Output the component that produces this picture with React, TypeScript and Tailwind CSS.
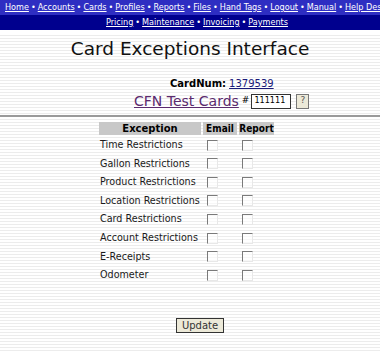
const topLinks = ["Home", "Accounts", "Cards", "Profiles", "Reports", "Files", "Hand Tags", "Logout", "Manual", "Help Desk"];
const subLinks = ["Pricing", "Maintenance", "Invoicing", "Payments"];
const exceptions = [
  "Time Restrictions",
  "Gallon Restrictions",
  "Product Restrictions",
  "Location Restrictions",
  "Card Restrictions",
  "Account Restrictions",
  "E-Receipts",
  "Odometer",
];

function Check() {
  return (
    <span className="inline-block h-[11px] w-[11px] border-t border-l border-t-[#7a7a7a] border-l-[#7a7a7a] border-r border-b border-r-[#e8e8e8] border-b-[#e8e8e8] bg-white/60 align-middle" />
  );
}

function NavRow({ links, className }: { links: string[]; className: string }) {
  return (
    <div className={className}>
      {links.map((l, i) => (
        <span key={l}>
          {i > 0 && <span className="mx-[2px]">•</span>}
          <a href="#" className="underline">{l}</a>
        </span>
      ))}
    </div>
  );
}

export default function App() {
  return (
    <div className="min-h-[351px] w-[380px] overflow-hidden bg-[repeating-linear-gradient(to_bottom,#ffffff_0px,#ffffff_2px,#ececec_2px,#ececec_3px)] font-['DejaVu_Sans',Verdana,sans-serif] text-black">
      <NavRow
        links={topLinks}
        className="h-[15px] overflow-hidden whitespace-nowrap bg-[#2e2ec2] pl-[5px] font-['DejaVu_Sans_Condensed',Tahoma,sans-serif] text-[9px] leading-[15px] text-white"
      />
      <NavRow
        links={subLinks}
        className="h-[15px] whitespace-nowrap bg-[#00008e] pl-[14px] text-center font-['DejaVu_Sans_Condensed',Tahoma,sans-serif] text-[9px] leading-[15px] text-white"
      />
      <div className="h-[3px] bg-white" />
      <h1 className="mt-[4px] text-center text-[18.5px] leading-[24px] font-normal text-[#111]">Card Exceptions Interface</h1>

      <div className="mt-[17px] pl-[170px] text-[10px] leading-[12px]">
        <span className="font-bold">CardNum:</span>
        <a href="#" className="ml-[3px] text-[#1a1a7a] underline">1379539</a>
      </div>
      <div className="mt-[3px] flex items-center gap-[2px] pl-[134px]">
        <a href="#" className="text-[14px] leading-[16px] text-[#5b2a6e] underline">CFN Test Cards</a>
        <span className="ml-[1px] text-[9px]">#</span>
        <span className="flex h-[15px] w-[40px] items-center border border-[#333] bg-white pl-[2px] font-['DejaVu_Sans_Condensed',Tahoma,sans-serif] text-[9px]">111111</span>
        <span className="ml-[3px] flex h-[15px] w-[13px] items-center justify-center border border-[#777] bg-[#ece9d8] text-[9px] text-[#555]">?</span>
      </div>

      <hr className="mt-[6px] border-t-2 border-[#9a9a9a]" />

      <table className="mt-[5px] ml-[97px] border-separate border-spacing-x-[2px] border-spacing-y-0 text-[9.6px]">
        <thead>
          <tr className="h-[13px] leading-[13px]">
            <th className="w-[102px] bg-[#c8c8c8] text-[10px] font-bold">Exception</th>
            <th className="w-[34px] bg-[#c8c8c8] font-['DejaVu_Sans_Condensed',Tahoma,sans-serif] text-[10px] font-bold">Email</th>
            <th className="w-[35px] bg-[#c8c8c8] font-['DejaVu_Sans_Condensed',Tahoma,sans-serif] text-[10px] font-bold">Report</th>
          </tr>
        </thead>
        <tbody>
          {exceptions.map((e) => (
            <tr key={e} className="h-[18.6px]">
              <td className="whitespace-nowrap pl-[1px] pt-[2px] text-left text-[#1a1a1a]">{e}</td>
              <td className="pl-[4px] pt-[2px] text-left"><Check /></td>
              <td className="pl-[3px] pt-[2px] text-left"><Check /></td>
            </tr>
          ))}
        </tbody>
      </table>

      <div className="mt-[34px] flex justify-center pl-[20px]">
        <button className="h-[15px] w-[48px] border border-[#333] bg-[#ece9d8] text-[10px] leading-[13px] text-[#333]">Update</button>
      </div>
    </div>
  );
}
